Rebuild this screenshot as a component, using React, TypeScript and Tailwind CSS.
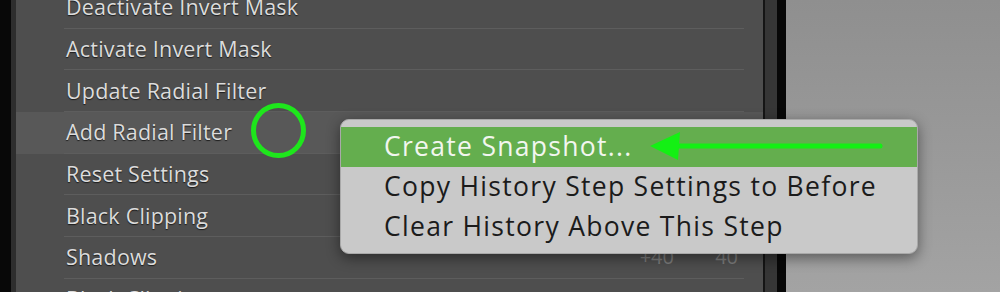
import React from "react";

const rows = [
  { label: "Deactivate Invert Mask" },
  { label: "Activate Invert Mask" },
  { label: "Update Radial Filter" },
  { label: "Add Radial Filter", active: true },
  { label: "Reset Settings" },
  { label: "Black Clipping" },
  { label: "Shadows", from: "+40", to: "40" },
  { label: "Black Clipping", from: "-41", to: "-41" },
];

const menuItems = [
  "Create Snapshot...",
  "Copy History Step Settings to Before",
  "Clear History Above This Step",
];

export default function App() {
  return (
    <div className="relative w-[1000px] h-[292px] overflow-hidden flex bg-[#0b0b0b]">
      {/* left edge */}
      <div className="w-[11px] bg-[#080808]" />
      <div className="w-[5px] bg-[#2e2e2e]" />

      {/* history panel */}
      <div
        className="w-[747px] bg-[#4e4e4e] flex flex-col -mt-[13px]"
        style={{ fontFamily: '"Open Sans", sans-serif' }}
      >
        {rows.map((r, i) => (
          <div key={i} className={`h-[41.7px] shrink-0 ${r.active ? "bg-[#585858]" : ""}`}>
            <div className="ml-[48px] mr-[19px] h-full flex items-center border-b border-[#5d5d5d] pl-[2px]">
              <span className="flex-1 text-[21.5px] tracking-[0.2px] text-[#dcdcdc] [text-shadow:0_1px_1px_#1c1c1c]">
                {r.label}
              </span>
              {r.from && (
                <>
                  <span className="w-[50px] text-right text-[20px] text-[#7c7c7c]">{r.from}</span>
                  <span className="w-[70px] text-right pr-[6px] text-[20px] text-[#7c7c7c]">{r.to}</span>
                </>
              )}
            </div>
          </div>
        ))}
      </div>

      {/* panel divider */}
      <div className="w-[14px] bg-[#363636] border-l-2 border-[#151515]" />
      <div className="w-[9px] bg-[#070707]" />

      {/* preview area */}
      <div className="flex-1 bg-gradient-to-b from-[#8f8f8f] to-[#a3a3a3]" />

      {/* context menu */}
      <div
        className="absolute left-[340px] top-[119px] w-[578px] h-[135px] rounded-[9px] bg-[#c9c9c9] shadow-[0_4px_14px_rgba(0,0,0,0.45)] pt-[7px] border border-[#a9a9a9]"
        style={{ fontFamily: '"Open Sans", sans-serif' }}
      >
        {menuItems.map((m, i) => (
          <div
            key={m}
            className={`h-[40px] flex items-center pl-[43px] text-[26.5px] tracking-[1.3px] ${
              i === 0 ? "bg-[#64ae4e] text-[#f2f6ef]" : "text-[#1b1b1b]"
            }`}
          >
            {m}
          </div>
        ))}
      </div>

      {/* annotation: circle */}
      <div className="absolute left-[251px] top-[103px] w-[55px] h-[55px] rounded-full border-[5px] border-[#1ee61c]" />

      {/* annotation: arrow */}
      <svg className="absolute left-[648px] top-[130px]" width="236" height="32" viewBox="0 0 236 32">
        <line x1="24" y1="16" x2="232" y2="16" stroke="#14f014" strokeWidth="5" strokeLinecap="round" />
        <polygon points="2,16 32,2 30,30" fill="#14f014" />
      </svg>
    </div>
  );
}
